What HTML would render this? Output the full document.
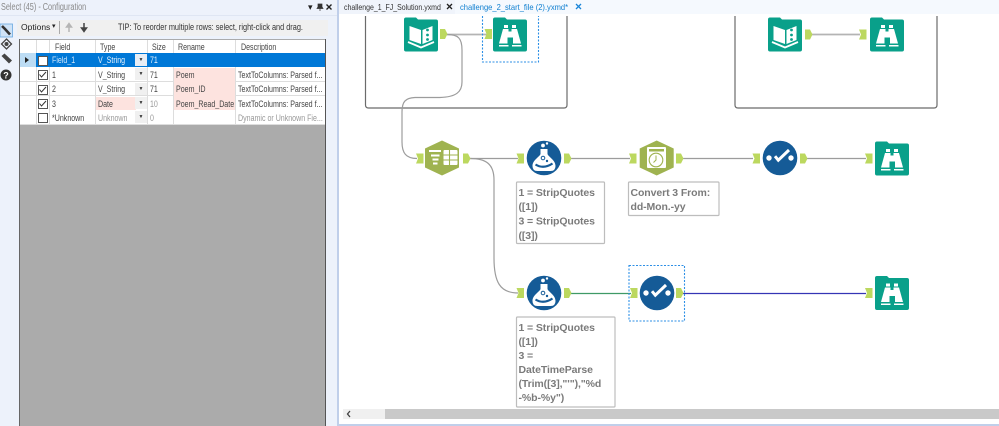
<!DOCTYPE html>
<html><head><meta charset="utf-8"><style>
html,body{margin:0;padding:0;background:#fff}
body{width:999px;height:426px;position:relative;overflow:hidden;font-family:"Liberation Sans",sans-serif}
.a{position:absolute}
.t{position:absolute;font-size:9px;color:#444;white-space:nowrap;line-height:14px;transform:scaleX(.785);transform-origin:0 0}
.r{position:absolute;left:20px;width:305px;height:14px;border-bottom:1px solid #ddd;background:#fff}
.v{position:absolute;top:40px;width:1px;background:#ddd;height:85px}
.pk{position:absolute;background:#fde3df}
.dd{position:absolute;left:135px;width:12px;height:12px;background:#f0f0f0;color:#333;font-size:5px;line-height:12px;text-align:center}
.cb{position:absolute;left:38px;width:7.500px;height:7.500px;border:1px solid #555;background:#fff}
</style></head><body>
<div class="a" style="left:0;top:0;width:337px;height:426px;background:#edf2fb"></div>
<div class="a" style="left:0;top:15px;width:337px;height:1px;background:#dfe6f3"></div>
<div class="a" style="left:1px;top:2px;font-size:10px;color:#8a8a8a;line-height:11px;white-space:nowrap;transform:scaleX(.73);transform-origin:0 0">Select (45) - Configuration</div>
<div class="a" style="left:308px;top:1px;font-size:9px;color:#222;line-height:12px;white-space:nowrap">&#9662;</div>
<svg class="a" style="left:316px;top:3px" width="20" height="9"><path d="M2 1h4v3l1 1.500H1L2 4zM4 5v3" fill="#333" stroke="#333" stroke-width=".7"/><path d="M10.500 1.500l5 5M15.500 1.500l-5 5" stroke="#222" stroke-width="1.400"/></svg>
<div class="a" style="left:17px;top:20px;width:311px;height:16px;background:#f0f0f0"></div>
<div class="a" style="left:21px;top:21px;font-size:8.500px;color:#222;line-height:13px">Options</div>
<div class="a" style="left:52px;top:21px;font-size:7px;color:#222;line-height:12px">&#9662;</div>
<div class="a" style="left:59px;top:21px;width:1px;height:13px;background:#aaa"></div>
<svg class="a" style="left:64px;top:22px" width="25" height="11"><path d="M5 10V3M2.500 5L5 1.500 7.500 5z" stroke="#b5b5b5" fill="#b5b5b5" stroke-width="1.500"/><path d="M20 1v7M17.500 6L20 9.500 22.500 6z" stroke="#444" fill="#444" stroke-width="1.500"/></svg>
<div class="a" style="left:118px;top:21px;font-size:9px;color:#333;line-height:13px;white-space:nowrap;transform:scaleX(.815);transform-origin:0 0">TIP: To reorder multiple rows: select, right-click and drag.</div>

<!-- side tools -->
<svg class="a" style="left:0;top:20px" width="17" height="70">
<rect x="0" y="4" width="12.500" height="13" fill="#cfe3f7" stroke="#6aa8e0" stroke-width=".8"/>
<path d="M2 6l3 3 5 5.500" stroke="#333" stroke-width="2.600" fill="none"/>
<path d="M6.500 19.500l5 5-5 5-5-5z" fill="none" stroke="#444" stroke-width="1.300" transform="translate(0,-.5)"/><circle cx="6.500" cy="24" r="2" fill="#444"/>
<path d="M1.500 36l3-2.500 7.500 7-3 3z" fill="#444"/>
<circle cx="6" cy="55" r="5.500" fill="#333"/><text x="6" y="58.500" font-size="9" font-weight="bold" fill="#fff" text-anchor="middle" font-family="Liberation Sans">?</text>
</svg>

<!-- grid -->
<div class="a" style="left:19px;top:39px;width:307px;height:387px;background:#ababab;border-left:1px solid #666;border-right:1px solid #555;box-sizing:border-box"></div>
<div class="a" style="left:20px;top:40px;width:305px;height:13px;background:#fff"></div>
<div class="a" style="left:20px;top:53px;width:305px;height:14px;background:#0078d7"></div>
<div class="r" style="top:67px"></div><div class="r" style="top:82px;height:13px"></div><div class="r" style="top:96px"></div><div class="r" style="top:110px"></div>
<div class="a" style="left:20px;top:53px;width:16px;height:14px;background:#bcdcf4"></div>
<div class="a" style="left:25px;top:57px;width:0;height:0;border-left:4px solid #222;border-top:3.500px solid transparent;border-bottom:3.500px solid transparent"></div>
<div class="pk" style="left:173px;top:68px;width:62px;height:42px"></div>
<div class="pk" style="left:96px;top:97px;width:40px;height:13px"></div>
<div class="v" style="left:36px"></div><div class="v" style="left:49px"></div><div class="v" style="left:95px"></div><div class="v" style="left:147px"></div><div class="v" style="left:173px"></div><div class="v" style="left:235px"></div>
<div class="a" style="left:36px;top:53px;width:289px;height:14px;background:#0078d7"></div>
<div class="t" style="left:55px;top:40px">Field</div><div class="t" style="left:100px;top:40px">Type</div><div class="t" style="left:152px;top:40px">Size</div><div class="t" style="left:178px;top:40px">Rename</div><div class="t" style="left:241px;top:40px">Description</div>
<div class="cb" style="top:56px"></div>
<div class="cb" style="top:70px"></div><div class="cb" style="top:85px"></div><div class="cb" style="top:99px"></div><div class="cb" style="top:113px"></div>
<svg class="a" style="left:38px;top:70px" width="11" height="40"><g fill="none" stroke="#333" stroke-width="1"><path d="M1.500 4.500l2 2.500L8 2"/><path d="M1.500 19.500l2 2.500L8 17"/><path d="M1.500 33.500l2 2.500L8 31"/></g></svg>
<div class="dd" style="top:54px;background:#e8eef5">&#9660;</div><div class="dd" style="top:68px">&#9660;</div><div class="dd" style="top:83px">&#9660;</div><div class="dd" style="top:97px">&#9660;</div><div class="dd" style="top:111px">&#9660;</div>

<div class="t" style="left:52px;top:53px;color:#cfe6fa">Field_1</div><div class="t" style="left:98px;top:53px;color:#e8f3fc">V_String</div><div class="t" style="left:150px;top:53px;color:#e8f3fc">71</div>
<div class="t" style="left:52px;top:68px">1</div><div class="t" style="left:98px;top:68px">V_String</div><div class="t" style="left:150px;top:68px">71</div><div class="t" style="left:176px;top:68px">Poem</div><div class="t" style="left:238px;top:68px">TextToColumns: Parsed f...</div>
<div class="t" style="left:52px;top:82px">2</div><div class="t" style="left:98px;top:82px">V_String</div><div class="t" style="left:150px;top:82px">71</div><div class="t" style="left:176px;top:82px">Poem_ID</div><div class="t" style="left:238px;top:82px">TextToColumns: Parsed f...</div>
<div class="t" style="left:52px;top:97px">3</div><div class="t" style="left:98px;top:97px">Date</div><div class="t" style="left:150px;top:97px;color:#999">10</div><div class="t" style="left:176px;top:97px">Poem_Read_Date</div><div class="t" style="left:238px;top:97px">TextToColumns: Parsed f...</div>
<div class="t" style="left:52px;top:111px">*Unknown</div><div class="t" style="left:98px;top:111px;color:#999">Unknown</div><div class="t" style="left:150px;top:111px;color:#999">0</div><div class="t" style="left:238px;top:111px;color:#999">Dynamic or Unknown Fie...</div>

<!-- canvas -->
<div class="a" style="left:337px;top:0;width:2px;height:426px;background:#c0cfea"></div>
<div class="a" style="left:339px;top:424px;width:660px;height:2px;background:#c0cfea"></div>
<div class="a" style="left:343px;top:409px;width:656px;height:10px;background:#c9c9c9"></div>
<div class="a" style="left:343px;top:409px;width:42px;height:10px;background:#f0f0f0"></div>
<svg class="a" style="left:345px;top:410px" width="8" height="8"><path d="M5 1L2.500 4 5 7" fill="none" stroke="#444" stroke-width="1.300"/></svg>

<svg class="a" style="left:0;top:0" width="999" height="426" font-family="Liberation Sans">
<defs>
<symbol id="o" overflow="visible"><path d="M0 -5h5l2.500 5-2.500 5H0z" fill="#bcd85f"/></symbol>
<symbol id="i" overflow="visible"><path d="M0 -5h7.500v10H0l2-5z" fill="#bcd85f"/></symbol>
<symbol id="folder" overflow="visible"><path d="M0 2q0-2 2-2h10l2 2h18q2 0 2 2v28q0 2-2 2H2q-2 0-2-2z" fill="#09a08a" transform="translate(0,-1)"/></symbol>
<symbol id="bino" overflow="visible"><use href="#folder"/>
<path d="M11 6.500h4v3h-4zM19 6.500h4v3h-4z" fill="#fff"/><path d="M10 10.500H15.500V13H18.500V10.500H24L28 25H20V19H14.500V25H6z" fill="#fff"/><path d="M6 26.500h9.500V28H6zM19 26.500h9.500V28H19z" fill="#fff"/></symbol>
<symbol id="book" overflow="visible"><use href="#folder"/>
<path d="M5.500 7.500L17 11.500V25.500L5.500 21.500zM18.500 11.500L28.500 7.500V21.500L18.500 25.500z" fill="#fff"/><path d="M4 23.500L17 29 30 23.500" fill="none" stroke="#fff" stroke-width="1.800"/><circle cx="23.500" cy="11.500" r="1.400" fill="#09a08a"/><circle cx="23.500" cy="16.500" r="1.400" fill="#09a08a"/><circle cx="23.500" cy="21" r="1.400" fill="#09a08a"/></symbol>
<symbol id="flask" overflow="visible"><circle cx="0" cy="0" r="17.300" fill="#155b97"/>
<path d="M-3.500 -9h7v5c1 3 8 6 8 12q0 5-5 5h-13q-5 0-5-5c0-6 7-9 8-12z" fill="#fff"/><path d="M-8.500 6.500q8 5 17-1" fill="none" stroke="#155b97" stroke-width="2.200"/><circle cx="-1" cy="0" r="1.800" fill="none" stroke="#155b97"/><circle cx="3" cy="3" r="1.200" fill="#155b97"/><circle cx="-1" cy="-12.500" r="1.900" fill="#fff"/><circle cx="3" cy="-14.500" r="1.200" fill="#fff"/></symbol>
<symbol id="check" overflow="visible"><circle cx="0" cy="0" r="17.300" fill="#155b97"/>
<circle cx="-11" cy="0" r="2.700" fill="#fff"/><circle cx="11" cy="0" r="2.700" fill="#fff"/><path d="M-5 -1.800L-1.700 2.200 9 -8" fill="none" stroke="#fff" stroke-width="3"/></symbol>
<symbol id="hex" overflow="visible"><path d="M0 -17.500L17 -9.500V9.500L0 17.500-17 9.500V-9.500z" fill="#9fb350"/></symbol>
</defs>

<!-- containers -->
<path d="M365.500 16V105q0 3 3 3H564q3 0 3-3V16" fill="none" stroke="#6b6b6b" stroke-width="1.200"/>
<path d="M735 16V105q0 3 3 3H934q3 0 3-3V16" fill="none" stroke="#6b6b6b" stroke-width="1.200"/>

<!-- wires -->
<g fill="none" stroke="#9c9c9c" stroke-width="1.200">
<path d="M447 34.500H487" stroke="#b4b4b4" stroke-width="1.700"/>
<path d="M812 34.500H860" stroke="#b4b4b4" stroke-width="1.700"/>
<path d="M447 34.500C458 34.500 462 38 462 50V82C462 92 456 97 440 97.500H415C405 98 402 102 402 112V142C402 153 406 158.500 417 158.500"/>
<path d="M470 158.500H518"/><path d="M571 158.500H630"/><path d="M683 158.500H753"/><path d="M807 158.500H866"/>
<path d="M470 158.500C486 158.500 494 164 494 180V258C494 282 500 293 518 293"/>
</g>
<path d="M571 293.500H631" stroke="#3f9a66" stroke-width="1.300"/>
<path d="M683 293.500H866" stroke="#3535b5" stroke-width="1.300"/>

<!-- top row -->
<use href="#book" x="404" y="18.500"/><use href="#o" x="440" y="34"/><use href="#i" x="484.500" y="34"/>
<use href="#bino" x="493" y="18.500"/>
<rect x="482.500" y="8" width="56" height="54" fill="none" stroke="#2d8fe6" stroke-width="1.100" stroke-dasharray="2 1.500"/>
<use href="#book" x="768" y="18.500"/><use href="#o" x="805" y="34.500"/><use href="#i" x="859" y="34.500"/><use href="#bino" x="870" y="18.500"/>

<!-- row 2 -->
<use href="#i" x="416" y="158.500"/><use href="#hex" x="442" y="158"/><use href="#o" x="463" y="158.500"/>
<rect x="443.500" y="150" width="14" height="15" rx="1" fill="#fff"/>
<path d="M443.500 155H457.500M443.500 160H457.500M449.500 150V165" stroke="#9fb350" stroke-width="1.100" fill="none"/>
<path d="M429 150H441v2H429zM431 154.500H439.500v2H431zM432.500 158.500H438.500v2h-6zM433 162.500h4.500v2H433z" fill="#fff"/>
<use href="#i" x="516.500" y="158.500"/><use href="#flask" x="544" y="158"/><use href="#o" x="564" y="158.500"/>
<use href="#i" x="629" y="158.500"/><use href="#hex" x="656.700" y="158"/><use href="#o" x="676" y="158.500"/>
<rect x="647" y="147" width="19" height="21" rx="1" fill="#fff"/><rect x="649" y="149" width="15" height="2.500" fill="#9fb350"/><circle cx="656" cy="160" r="6.800" fill="none" stroke="#9fb350" stroke-width="1.100"/><path d="M656 155.500V160l-2.500 2.500" fill="none" stroke="#9fb350"/>
<use href="#i" x="752.500" y="158.500"/><use href="#check" x="780" y="158"/><use href="#o" x="800" y="158.500"/>
<use href="#i" x="865" y="158.500"/><use href="#bino" x="875" y="142.500"/>

<!-- row 3 -->
<use href="#i" x="516.500" y="293"/><use href="#flask" x="544" y="293"/><use href="#o" x="564" y="293"/>
<use href="#i" x="630" y="293"/><use href="#check" x="657" y="293"/><use href="#o" x="676" y="293"/>
<rect x="629" y="265.500" width="55.500" height="55.500" fill="none" stroke="#2d8fe6" stroke-width="1.100" stroke-dasharray="2 1.500"/>
<use href="#i" x="865" y="293"/><use href="#bino" x="875" y="277"/>

<!-- annotations -->
<g fill="#fff" stroke="#bdbdbd" stroke-width="1.200"><rect x="516.500" y="182" width="88" height="61.500" rx="1"/><rect x="628.500" y="182" width="90.500" height="33.500" rx="1"/><rect x="516.500" y="317" width="98.500" height="90" rx="1"/></g>
<g font-size="10.500" font-weight="bold" fill="#7b7b7b" letter-spacing="-.1">
<text x="518.500" y="196">1 = StripQuotes</text><text x="518.500" y="210">([1])</text><text x="518.500" y="224.500">3 = StripQuotes</text><text x="518.500" y="239">([3])</text>
<text x="630.500" y="196">Convert 3 From:</text><text x="630.500" y="210">dd-Mon.-yy</text>
<text x="518.500" y="331">1 = StripQuotes</text><text x="518.500" y="345">([1])</text><text x="518.500" y="359">3 =</text><text x="518.500" y="373">DateTimeParse</text><text x="518.500" y="387">(Trim([3],"'"),"%d</text><text x="518.500" y="401">-%b-%y")</text>
</g>
</svg>

<!-- tab bar above canvas content -->
<div class="a" style="left:339px;top:0;width:660px;height:14px;background:#f5f9fe"></div>
<div class="a" style="left:339px;top:14px;width:660px;height:2px;background:#fff"></div>
<div class="a" style="left:339px;top:0;width:116px;height:14px;background:#f0f4fb"></div>
<div class="a" style="left:344px;top:1px;font-size:8.500px;color:#333;line-height:12px;white-space:nowrap;transform:scaleX(.82);transform-origin:0 0">challenge_1_FJ_Solution.yxmd</div>
<div class="a" style="left:460px;top:1px;font-size:8.500px;color:#0f7fd0;line-height:12px;white-space:nowrap;transform:scaleX(.89);transform-origin:0 0">challenge_2_start_file (2).yxmd*</div>
<svg class="a" style="left:446px;top:2px" width="140" height="10"><path d="M1 2l5 5M6 2l-5 5" stroke="#222" stroke-width="1.300"/><path d="M130 2l5 5M135 2l-5 5" stroke="#1a86d8" stroke-width="1.300"/></svg>
</body></html>
